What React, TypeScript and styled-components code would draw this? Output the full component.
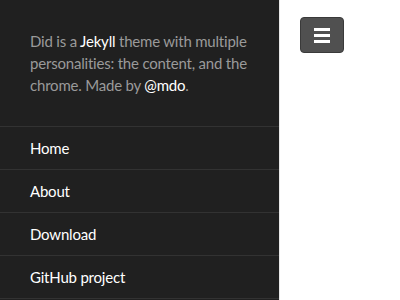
import styled, { createGlobalStyle } from "styled-components";

const Global = createGlobalStyle`
  html, body {
    margin: 0;
    padding: 0;
    height: 100%;
    background: #fff;
  }
  #root {
    height: 100%;
  }
`;

const Page = styled.div`
  display: flex;
  width: 400px;
  height: 300px;
  overflow: hidden;
  font-family: "Lato", "Liberation Sans", sans-serif;
`;

const Sidebar = styled.aside`
  width: 279px;
  flex-shrink: 0;
  background: #202020;
  color: #9a9a9a;
`;

const Intro = styled.p`
  margin: 0;
  padding: 30px 20px 30px 30px;
  font-size: 15px;
  letter-spacing: -0.2px;
  line-height: 22px;
  border-bottom: 1px solid #323232;

  a {
    color: #fff;
    text-decoration: none;
  }
`;

const Nav = styled.nav`
  display: flex;
  flex-direction: column;
`;

const NavLink = styled.a`
  display: block;
  padding: 0 30px;
  height: 42px;
  line-height: 42px;
  font-size: 15px;
  letter-spacing: -0.2px;
  color: #fff;
  text-decoration: none;
  border-bottom: 1px solid #323232;
`;

const Content = styled.main`
  flex: 1;
  border-left: 1px solid #e8e8e8;
  padding: 17px 20px;
`;

const MenuButton = styled.button`
  display: flex;
  flex-direction: column;
  align-items: center;
  justify-content: center;
  gap: 3px;
  width: 44px;
  height: 36px;
  padding: 0;
  background: #505050;
  border: 1px solid #3a3a3a;
  border-radius: 4px;
  cursor: pointer;
`;

const Bar = styled.span`
  display: block;
  width: 16px;
  height: 3px;
  background: #fff;
`;

const links = ["Home", "About", "Download", "GitHub project"];

export default function App() {
  return (
    <>
      <Global />
      <Page>
        <Sidebar>
          <Intro>
            Did is a <a href="#">Jekyll</a> theme with multiple personalities:
            the content, and the chrome. Made by <a href="#">@mdo</a>.
          </Intro>
          <Nav>
            {links.map((l) => (
              <NavLink key={l} href="#">
                {l}
              </NavLink>
            ))}
          </Nav>
        </Sidebar>
        <Content>
          <MenuButton aria-label="Menu">
            <Bar />
            <Bar />
            <Bar />
          </MenuButton>
        </Content>
      </Page>
    </>
  );
}
